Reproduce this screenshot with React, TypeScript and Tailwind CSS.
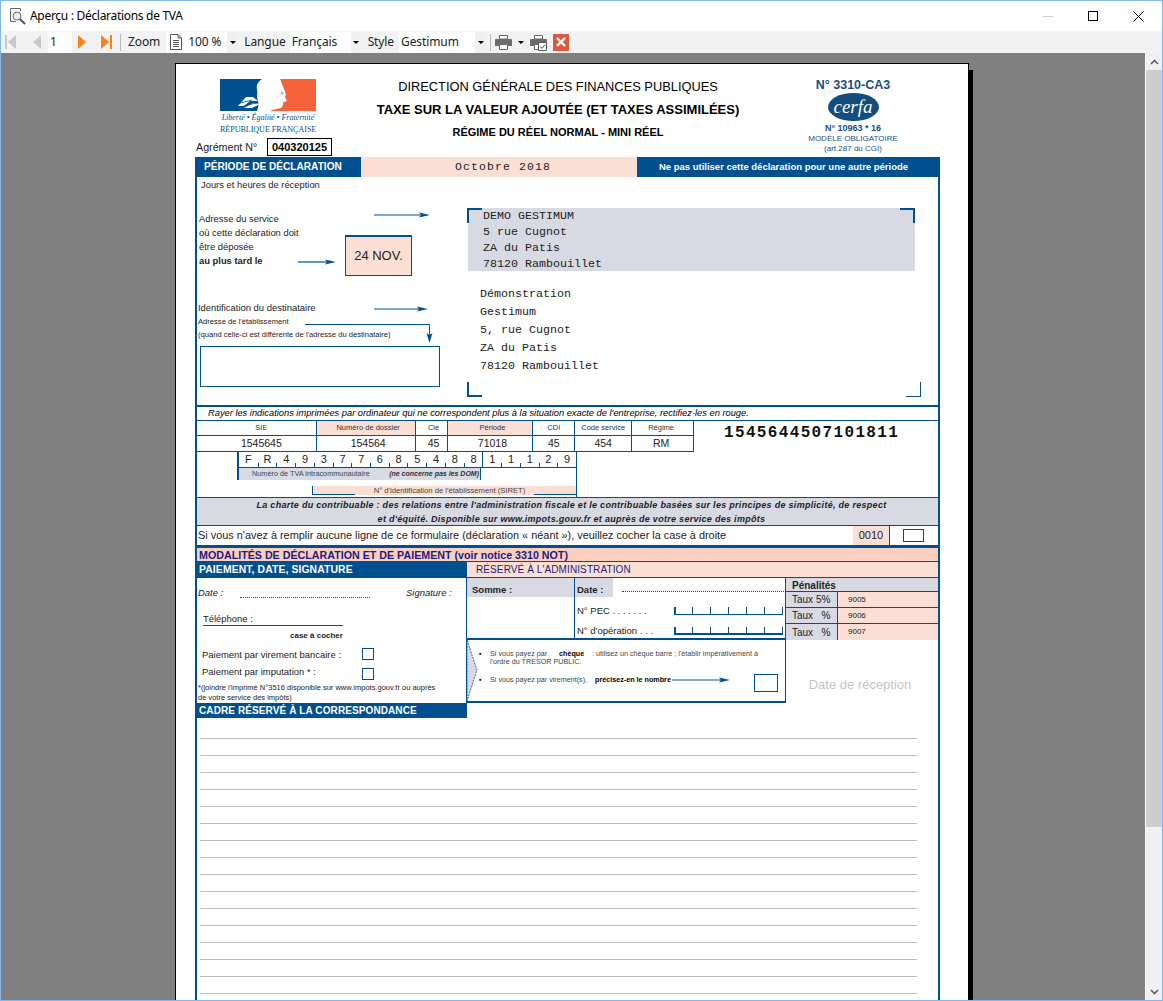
const blue = "#00508f";

function Arrow({ className, width }: { className: string; width: number }) {
  return (
    <svg className={`absolute ${className}`} width={width} height="8" viewBox={`0 0 ${width} 8`}>
      <line x1="0" y1="4" x2={width - 8} y2="4" stroke={blue} strokeWidth="1.2" />
      <path d={`M${width - 11} 1.5 L${width} 4 L${width - 11} 6.5 L${width - 9} 4 Z`} fill={blue} />
    </svg>
  );
}

function Corner({ className }: { className: string }) {
  return <div className={`absolute h-[15px] w-[15px] border-[#00508f] ${className}`} />;
}

function Marianne() {
  return (
    <svg width="96" height="32" viewBox="0 0 96 32">
      <path d="M0 0 H42 C38 3 36 6 37 10 C38 15 36 18 38 22 C39 26 38 29 37 32 H0 Z" fill="#00508f" />
      <path d="M60 0 H96 V32 H50 C54 30 60 30 62 28 C64 26 62 24 64 23 L67 22 L65 18 L66 15 C64 12 64 8 62 5 C61 3 61 2 60 0 Z" fill="#f5623a" />
      <path d="M18 27 L26 18 L33 18 L38 22 L30 22 L24 27 Z M24 29 L33 24 L40 25 L32 29 Z" fill="#fff" />
      <path d="M20 24 L32 21 M24 27 L36 24" stroke="#00508f" strokeWidth="0.8" />
      <circle cx="62" cy="14" r="1.5" fill="#9fb8d8" />
    </svg>
  );
}

function DocIcon() {
  return (
    <svg width="12" height="16" viewBox="0 0 12 16" fill="none" stroke="#555">
      <path d="M.5.5 H8 L11.5 4 V15.5 H.5 Z M8 .5 V4 H11.5" />
      <path d="M3 6.5 H9 M3 8.5 H9 M3 10.5 H9 M3 12.5 H9" />
    </svg>
  );
}

function PrinterIcon({ check }: { check?: boolean }) {
  return (
    <svg width="17" height="17" viewBox="0 0 17 17">
      <path d="M4.5 1.5 H12.5 V5 H4.5 Z" fill="#fff" stroke="#666" />
      <path d="M0 6 Q0 5 1 5 H16 Q17 5 17 6 V12 H13 V10 H4 V12 H0 Z" fill="#6b6b6b" />
      <path d="M4.5 10.5 H12.5 V15.5 H4.5 Z" fill="#fff" stroke="#666" />
      {check && <path d="M8.5 8.5 H16.5 V16.5 H8.5 Z" fill="#fff" stroke="#555" />}
      {check && <path d="M10.5 12.5 L12 14.5 L15 10.5" fill="none" stroke="#555" />}
    </svg>
  );
}

function TitleIcon() {
  return (
    <svg width="16" height="17" viewBox="0 0 16 17" fill="none" stroke="#666">
      <path d="M.5 13.5 V.5 H10.5 V3" />
      <path d="M.5 13.5 H6" />
      <circle cx="7" cy="8" r="4" fill="#eef2f6" />
      <path d="M10 11 L15 16" strokeWidth="2" stroke="#555" />
    </svg>
  );
}

function Combo({ text, width }: { text: string; width: number }) {
  return (
    <div className="flex h-[21px] items-center bg-white" style={{ width }}>
      <span className="flex-1 pl-[2px]">{text}</span>
      <div className="flex h-full w-[11px] items-center justify-center bg-[#f0f0f0]">
        <div className="h-0 w-0 border-x-[3px] border-t-[3px] border-x-transparent border-t-black" />
      </div>
    </div>
  );
}

function Toolbar() {
  return (
    <div className="flex h-[22px] items-center bg-[#f2f2f2] font-['Noto_Sans',sans-serif] text-[12px] tracking-[-0.1px] text-[#222]">
      <svg className="ml-[4px]" width="12" height="16" viewBox="0 0 12 16">
        <rect x="0" y="1" width="2" height="14" fill="#c8c8c8" />
        <path d="M11 1 V15 L3 8 Z" fill="#c8c8c8" />
      </svg>
      <svg className="ml-[14px]" width="11" height="16" viewBox="0 0 11 16">
        <path d="M10 1 V15 L2 8 Z" fill="#c8c8c8" />
      </svg>
      <div className="ml-[6px] flex h-[21px] w-[24px] items-center bg-white pl-[2px]">1</div>
      <svg className="ml-[5px]" width="10" height="16" viewBox="0 0 10 16">
        <path d="M1 1 V15 L9 8 Z" fill="#f5841f" />
      </svg>
      <svg className="ml-[14px]" width="12" height="16" viewBox="0 0 12 16">
        <path d="M0 1 V15 L8 8 Z" fill="#f5841f" />
        <rect x="9" y="1" width="2" height="14" fill="#f5841f" />
      </svg>
      <div className="ml-[7px] h-[17px] w-px bg-[#bbb]" />
      <span className="ml-[7px]">Zoom</span>
      <div className="ml-[6px] flex h-[21px] w-[72px] items-center bg-white pl-[4px]">
        <DocIcon />
        <span className="ml-[6px] flex-1">100 %</span>
        <div className="flex h-full w-[11px] items-center justify-center bg-[#f0f0f0]">
          <div className="h-0 w-0 border-x-[3px] border-t-[3px] border-x-transparent border-t-black" />
        </div>
      </div>
      <span className="ml-[6px]">Langue</span>
      <div className="ml-[4px]">
        <Combo text="Français" width={72} />
      </div>
      <span className="ml-[6px]">Style</span>
      <div className="ml-[5px]">
        <Combo text="Gestimum" width={87} />
      </div>
      <div className="ml-[4px] h-[17px] w-px bg-[#bbb]" />
      <div className="ml-[4px]">
        <PrinterIcon />
      </div>
      <div className="ml-[6px] h-0 w-0 border-x-[3px] border-t-[3px] border-x-transparent border-t-black" />
      <div className="ml-[6px]">
        <PrinterIcon check />
      </div>
      <div className="ml-[6px] flex h-[17px] w-[16px] items-center justify-center bg-[#dc5a3c]">
        <svg width="10" height="10" viewBox="0 0 10 10">
          <path d="M1 1 L9 9 M9 1 L1 9" stroke="#fff" strokeWidth="2.4" />
        </svg>
      </div>
    </div>
  );
}

function PageHeader() {
  return (
    <div className="flex h-[93px] font-['Liberation_Sans',sans-serif]">
      <div className="w-[160px]">
        <div className="ml-[25px] mt-[15px] h-[32px]">
          <Marianne />
        </div>
        <div className="ml-[25px] mt-[2px] h-[10px] w-[96px] whitespace-nowrap text-center font-['Liberation_Serif',serif] text-[8px] italic leading-[10px] text-[#00508f]">
          Liberté • Égalité • Fraternité
        </div>
        <div className="ml-[25px] mt-[2px] h-[10px] w-[96px] whitespace-nowrap text-center font-['Liberation_Serif',serif] text-[8px] leading-[10px] text-[#00508f]">
          RÉPUBLIQUE FRANÇAISE
        </div>
        <div className="mt-[3px] flex h-[18px] items-center">
          <span className="ml-[1px] w-[71px] text-[10.7px] text-[#222]">Agrément N°</span>
          <div className="flex h-[18px] w-[65px] items-center justify-center border border-black text-[11px] font-bold">
            040320125
          </div>
        </div>
      </div>
      <div className="w-[406px] text-center text-black">
        <div className="mt-[13px] h-[20px] text-[12.85px] leading-[20px]">DIRECTION GÉNÉRALE DES FINANCES PUBLIQUES</div>
        <div className="mt-[3px] h-[20px] text-[13px] font-bold leading-[20px]">
          TAXE SUR LA VALEUR AJOUTÉE (ET TAXES ASSIMILÉES)
        </div>
        <div className="mt-[2px] h-[20px] text-[11px] font-bold leading-[20px]">RÉGIME DU RÉEL NORMAL - MINI RÉEL</div>
      </div>
      <div className="flex w-[184px] flex-col items-center text-[#1b4f7b]">
        <div className="mt-[13px] h-[16px] text-[12.5px] font-bold leading-[16px]">N° 3310-CA3</div>
        <div className="flex h-[28px] w-[51px] items-center justify-center rounded-[50%] bg-[#124d7e] font-['Liberation_Serif',serif] text-[19px] italic leading-[28px] text-white">
          cerfa
        </div>
        <div className="mt-[2px] h-[10px] text-[9px] font-bold leading-[10px]">N° 10963 * 16</div>
        <div className="h-[11px] whitespace-nowrap text-[8px] leading-[11px]">MODÈLE OBLIGATOIRE</div>
        <div className="h-[9px] text-[8px] leading-[9px]">(art.287 du CGI)</div>
      </div>
    </div>
  );
}

function PeriodBar() {
  return (
    <div className="flex h-[20px] items-stretch">
      <div className="flex w-[164px] items-center whitespace-nowrap bg-[#00508f] pl-[7px] text-[10.1px] font-bold text-white">
        PÉRIODE DE DÉCLARATION
      </div>
      <div className="flex w-[276px] items-center justify-center bg-[#fbdfd5] pl-[8px] font-['Liberation_Mono',monospace] text-[11.5px] tracking-[1.1px] text-[#222]">
        Octobre 2018
      </div>
      <div className="flex flex-1 items-center justify-center whitespace-nowrap bg-[#00508f] pr-[8px] text-[9.5px] font-bold text-white">
        Ne pas utiliser cette déclaration pour une autre période
      </div>
    </div>
  );
}

function AddressSection() {
  return (
    <div className="relative flex h-[228px]">
      <div className="w-[270px] text-[#222]">
        <div className="h-[16px] whitespace-nowrap pl-[4px] text-[9.4px] leading-[16px]">Jours et heures de réception</div>
        <div className="mt-[19px] flex">
          <div className="w-[148px] pl-[2px] text-[9.4px] leading-[14px]">
            <div>Adresse du service</div>
            <div>où cette déclaration doit</div>
            <div>être déposée</div>
            <div className="font-bold">au plus tard le</div>
          </div>
          <div className="mt-[23px] flex h-[41px] w-[67px] items-center justify-center border-x border-b border-t-2 border-[#00508f] bg-[#fbdfd5] text-[13px]">
            24 NOV.
          </div>
        </div>
        <div className="mt-[25px] h-[14px] whitespace-nowrap pl-[1px] text-[9.45px] leading-[14px]">Identification du destinataire</div>
        <div className="h-[13px] whitespace-nowrap pl-[1px] text-[7.6px] leading-[13px]">Adresse de l'établissement</div>
        <div className="h-[13px] whitespace-nowrap pl-[1px] text-[7.6px] leading-[13px]">
          (quand celle-ci est différente de l'adresse du destinataire)
        </div>
        <div className="ml-[3px] mt-[5px] h-[41px] w-[240px] border border-[#00508f]" />
      </div>
      <div className="flex-1 font-['Liberation_Mono',monospace] text-[11.67px] text-[#222]">
        <div className="ml-[1px] mt-[31px] h-[63px] w-[447px] bg-[#d7dae3] pl-[15px] leading-[16px]">
          <div>DEMO GESTIMUM</div>
          <div>5 rue Cugnot</div>
          <div>ZA du Patis</div>
          <div>78120 Rambouillet</div>
        </div>
        <div className="mt-[14px] pl-[13px] leading-[18px]">
          <div>Démonstration</div>
          <div>Gestimum</div>
          <div>5, rue Cugnot</div>
          <div>ZA du Patis</div>
          <div>78120 Rambouillet</div>
        </div>
      </div>
      <Arrow className="left-[177px] top-[34px]" width={56} />
      <Arrow className="left-[101px] top-[81px]" width={38} />
      <Arrow className="left-[177px] top-[128px]" width={54} />
      <svg className="absolute left-[108px] top-[147px]" width="128" height="20" viewBox="0 0 128 20" fill="none">
        <path d="M0 .5 H124.5 V12" stroke={blue} strokeWidth="1" />
        <path d="M121.5 9 L124.5 19 L127.5 9 L124.5 11 Z" fill={blue} />
      </svg>
      <Corner className="left-[270px] top-[31px] border-l-2 border-t-2" />
      <Corner className="left-[703px] top-[31px] border-r-2 border-t-2" />
      <Corner className="left-[270px] top-[205px] border-b-2 border-l-2" />
      <Corner className="left-[709px] top-[205px] border-b border-r" />
    </div>
  );
}

const idCells = [
  { label: "SIE", value: "1545645", width: "w-[120px]", pad: "pl-[10px]", pink: false },
  { label: "Numéro de dossier", value: "154564", width: "w-[99px]", pad: "pl-[5px]", pink: true },
  { label: "Clé", value: "45", width: "w-[33px]", pad: "pl-[4px]", pink: false },
  { label: "Période", value: "71018", width: "w-[85px]", pad: "pl-[4px]", pink: true },
  { label: "CDI", value: "45", width: "w-[42px]", pad: "", pink: false },
  { label: "Code service", value: "454", width: "w-[57px]", pad: "", pink: false },
  { label: "Régime", value: "RM", width: "w-[61px]", pad: "pr-[3px]", pink: false },
];

const tvaChars = "FR493776854881 1129".replace(" ", "").split("");

function IdentSection() {
  return (
    <>
      <div className="flex h-[16px] items-center whitespace-nowrap border-b border-t-2 border-[#00508f] pl-[11px] text-[9.3px] italic text-black">
        Rayer les indications imprimées par ordinateur qui ne correspondent plus à la situation exacte de l'entreprise, rectifiez-les en rouge.
      </div>
      <div className="flex h-[31px]">
        <div className="flex w-[497px] border-b border-r border-[#00508f]">
          {idCells.map((cell) => (
            <div key={cell.label} className={`${cell.width} border-r border-[#00508f] last:border-r-0`}>
              <div
                className={`flex h-[15px] items-center justify-center whitespace-nowrap border-b border-[#00508f] text-[7.5px] text-[#333] ${cell.pad} ${
                  cell.pink ? "bg-[#fbdfd5]" : ""
                }`}
              >
                {cell.label}
              </div>
              <div className={`flex h-[15px] items-center justify-center text-[10.5px] text-[#222] ${cell.pad}`}>{cell.value}</div>
            </div>
          ))}
        </div>
        <div className="ml-[30px] font-['Liberation_Mono',monospace] text-[16px] font-bold leading-[24px] tracking-[1.35px] text-[#111]">
          1545644507101811
        </div>
      </div>
      <div className="ml-[40px] h-[45px] w-[340px] border-r border-[#00508f] text-[#222]">
        <div className="grid h-[16px] grid-cols-[repeat(18,1fr)] border-b border-l-2 border-[#00508f] text-[11px]">
          {tvaChars.map((c, i) => (
            <div key={i} className={`flex items-end ${i === 13 ? "border-l border-[#00508f]" : ""}`}>
              {i > 0 && i !== 13 && <div className="h-[4px] w-px bg-[#00508f]" />}
              <div className="flex-1 self-center text-center leading-[15px]">{c}</div>
            </div>
          ))}
        </div>
        <div className="flex h-[12px]">
          <div className="flex h-[12px] w-[244px] items-center justify-between whitespace-nowrap border-l-2 border-r border-[#00508f] bg-[#d7dae3] pl-[13px] pr-[1px] text-[7.3px] text-[#444]">
            <span>Numéro de TVA intracommunautaire</span>
            <span className="text-[7px] font-bold italic text-[#333]">(ne concerne pas les DOM)</span>
          </div>
        </div>
        <div className="ml-[75px] mt-[6px] flex h-[9px] border-l border-[#00508f] bg-[#fbdfd5] text-[7.65px] leading-[9px]">
          <div className="w-[42px] border-b border-[#00508f]" />
          <div className="flex-1 whitespace-nowrap pl-[10px] text-center text-[#444]">N° d'identification de l'établissement (SIRET)</div>
          <div className="w-[42px] border-b border-[#00508f]" />
        </div>
      </div>
      <div className="h-[28px] whitespace-nowrap border-t border-[#00508f] bg-[#d7dae3] pl-[8px] text-center text-[9px] font-bold italic leading-[14px] tracking-[0.29px] text-[#222]">
        <div>La charte du contribuable : des relations entre l'administration fiscale et le contribuable basées sur les principes de simplicité, de respect</div>
        <div>et d'équité. Disponible sur www.impots.gouv.fr et auprès de votre service des impôts</div>
      </div>
      <div className="flex h-[21px] border-y border-[#00508f] text-[10.9px] text-[#222]">
        <div className="w-[656px] pl-[1px] leading-[19px]">
          Si vous n'avez à remplir aucune ligne de ce formulaire (déclaration « néant »), veuillez cocher la case à droite
        </div>
        <div className="flex w-[37px] items-center justify-center border-r border-[#00508f] bg-[#fbdfd5] text-[11px]">0010</div>
        <div className="flex flex-1 items-center justify-center pr-[1px]">
          <div className="h-[13px] w-[21px] border border-[#00508f]" />
        </div>
      </div>
      <div className="h-[16px] whitespace-nowrap border-b border-t-2 border-[#00508f] bg-[#fbcfbf] pl-[2px] text-[10.7px] font-bold leading-[14px] text-[#1c1c80]">
        MODALITÉS DE DÉCLARATION ET DE PAIEMENT (voir notice 3310 NOT)
      </div>
    </>
  );
}

const penalties = [
  { label: "Taux 5%", code: "9005" },
  { label: "Taux   %", code: "9006" },
  { label: "Taux   %", code: "9007" },
];

function TickBox({ thick }: { thick?: boolean }) {
  return (
    <div className={`flex h-[8px] w-[109px] border-[#00508f] ${thick ? "border-b-2" : "border-b"}`}>
      {[0, 1, 2, 3, 4, 5].map((i) => (
        <div key={i} className={`w-[18px] border-l border-[#00508f] ${i === 0 ? "border-l-2" : ""}`} />
      ))}
      <div className="border-r border-[#00508f]" />
    </div>
  );
}

function PaymentSection() {
  return (
    <>
      <div className="flex h-[16px]">
        <div className="flex w-[270px] items-center whitespace-nowrap bg-[#00508f] pl-[2px] text-[10.4px] font-bold tracking-[0.1px] text-white">
          PAIEMENT, DATE, SIGNATURE
        </div>
        <div className="flex flex-1 items-center whitespace-nowrap border-b border-[#00508f] bg-[#fbdfd5] pl-[9px] text-[10px] tracking-[0.1px] text-[#1c1c80]">
          RÉSERVÉ À L'ADMINISTRATION
        </div>
      </div>
      <div className="flex h-[125px]">
        <div className="w-[270px] border-r border-[#00508f] text-[9.45px] text-[#222]">
          <div className="flex h-[30px] items-center pl-[1px] pt-[1px]">
            <span className="w-[42px] italic">Date :</span>
            <div className="mt-[8px] h-px w-[130px] border-b border-dotted border-[#444]" />
            <span className="ml-[36px] italic">Signature :</span>
          </div>
          <div className="ml-[6px] mt-[4px] h-[14px] w-[140px] border-b border-[#00508f] leading-[13px]">Téléphone :</div>
          <div className="ml-[93px] mt-[5px] h-[10px] text-[8px] font-bold leading-[10px]">case à cocher</div>
          <div className="ml-[5px] mt-[6px] flex h-[16px] items-start">
            <span className="w-[160px] leading-[16px]">Paiement par virement bancaire :</span>
            <div className="mt-[1px] h-[12px] w-[12px] border border-[#00508f]" />
          </div>
          <div className="ml-[5px] mt-[1px] flex h-[16px] items-start">
            <span className="w-[160px] leading-[16px]">Paiement par imputation * :</span>
            <div className="mt-[4px] h-[12px] w-[12px] border border-[#00508f]" />
          </div>
          <div className="mt-[3px] whitespace-nowrap pl-[1px] text-[7.5px] leading-[10px]">
            *(joindre l'imprimé N°3516 disponible sur www.impots.gouv.fr ou auprès
            <br />
            de votre service des impôts)
          </div>
        </div>
        <div className="flex-1 text-[#222]">
          <div className="flex h-[62px] border-b-2 border-[#00508f]">
            <div className="w-[108px] border-r border-[#00508f]">
              <div className="flex h-[19px] items-center bg-[#d7dae3] pl-[5px] pt-[6px] text-[9.5px] font-bold">Somme :</div>
            </div>
            <div className="w-[211px] border-r border-[#00508f] text-[9.5px]">
              <div className="flex h-[19px] items-center">
                <div className="flex h-full w-[38px] items-center bg-[#d7dae3] pl-[2px] pt-[6px] font-bold">Date :</div>
                <div className="ml-[9px] mt-[8px] w-[162px] border-b border-dotted border-[#00508f]" />
              </div>
              <div className="mt-[4px] flex h-[20px] items-center justify-between whitespace-nowrap px-[2px]">
                <span>N° PEC . . . . . . .</span>
                <TickBox />
              </div>
              <div className="flex h-[20px] items-center justify-between whitespace-nowrap px-[2px]">
                <span>N° d'opération . . .</span>
                <TickBox thick />
              </div>
            </div>
            <div className="flex-1 text-[10px]">
              <div className="flex h-[14px] items-center border-b border-[#00508f] bg-[#d7dae3] pl-[6px] pt-px font-bold">Pénalités</div>
              {penalties.map((p) => (
                <div key={p.code} className="flex h-[16px] border-b border-[#00508f] last:border-b-0">
                  <div className="flex w-[52px] items-center whitespace-pre border-r border-[#00508f] bg-[#d7dae3] pl-[6px] text-[10px]">
                    {p.label}
                  </div>
                  <div className="flex flex-1 items-center bg-[#fbdfd5] pl-[10px] text-[8px]">{p.code}</div>
                </div>
              ))}
            </div>
          </div>
          <div className="flex h-[63px]">
            <div className="flex w-[319px] border-b-2 border-r border-[#00508f]">
              <svg className="shrink-0" width="11" height="61" viewBox="0 0 11 61">
                <path d="M0 0 L10 30 L0 61 Z" fill="#d7dae3" stroke={blue} strokeWidth="0.8" strokeDasharray="2 1" />
              </svg>
              <div className="flex-1 pl-[1px] text-[7.2px] leading-[8px] text-[#444]">
                <div className="mt-[10px] flex">
                  <span className="w-[11px] text-black">▪</span>
                  <div>
                    <div className="flex whitespace-nowrap">
                      <span className="w-[69px]">Si vous payez par</span>
                      <span className="w-[33px] font-bold text-black">chèque</span>
                      <span>: utilisez un chèque barré ; l'établir impérativement à</span>
                    </div>
                    <div>l'ordre du TRESOR PUBLIC.</div>
                  </div>
                </div>
                <div className="mt-[8px] flex items-center">
                  <div className="mb-[6px] flex h-[8px] items-center">
                    <span className="w-[11px] text-black">▪</span>
                    <span className="w-[105px] whitespace-nowrap">Si vous payez par virement(s),</span>
                    <span className="whitespace-nowrap font-bold text-black">précisez-en le nombre</span>
                    <svg className="ml-[1px]" width="59" height="8" viewBox="0 0 59 8">
                      <line x1="0" y1="4" x2="51" y2="4" stroke={blue} strokeWidth="1" />
                      <path d="M47 1.5 L58 4 L47 6.5 L49 4 Z" fill={blue} />
                    </svg>
                  </div>
                  <div className="ml-[23px] h-[18px] w-[24px] shrink-0 border border-[#00508f]" />
                </div>
              </div>
            </div>
            <div className="flex flex-1 items-center justify-center whitespace-nowrap pr-[4px] pt-[27px] text-[13px] text-[#c4c4c4]">
              Date de réception
            </div>
          </div>
        </div>
      </div>
      <div className="flex h-[15px] w-[270px] items-center whitespace-nowrap bg-[#00508f] pl-[2px] text-[10px] font-bold tracking-[0.1px] text-white">
        CADRE RÉSERVÉ À LA CORRESPONDANCE
      </div>
    </>
  );
}

function Lines() {
  return (
    <div className="ml-[3px] flex w-[717px] flex-col gap-[16px] pt-[20px]">
      {Array.from({ length: 16 }).map((_, i) => (
        <div key={i} className="h-px bg-[#bbbbbb]" />
      ))}
    </div>
  );
}

function Scrollbar() {
  return (
    <div className="flex w-[17px] flex-col border-l border-white bg-[#f0f0f0]">
      <div className="flex h-[17px] items-center justify-center">
        <svg width="9" height="6" viewBox="0 0 9 6">
          <path d="M1 5 L4.5 1.5 L8 5" fill="none" stroke="#606060" strokeWidth="1.6" />
        </svg>
      </div>
      <div className="h-[757px] bg-[#cdcdcd]" />
      <div className="flex flex-1 items-end justify-center pb-[5px]">
        <svg width="9" height="6" viewBox="0 0 9 6">
          <path d="M1 1 L4.5 4.5 L8 1" fill="none" stroke="#606060" strokeWidth="1.6" />
        </svg>
      </div>
    </div>
  );
}

export default function App() {
  return (
    <div className="flex h-[1001px] w-[1163px] flex-col overflow-hidden border border-[#7fb9f2] bg-white">
      <div className="flex h-[30px] items-center font-['Noto_Sans',sans-serif] text-[12px] text-black">
        <div className="ml-[9px]">
          <TitleIcon />
        </div>
        <span className="ml-[4px] tracking-[-0.3px]">Aperçu : Déclarations de TVA</span>
        <div className="ml-auto flex items-center">
          <div className="mr-[35px] h-px w-[10px] bg-[#ccc]" />
          <div className="mr-[35px] h-[10px] w-[10px] border border-black" />
          <svg className="mr-[18px]" width="11" height="11" viewBox="0 0 11 11">
            <path d="M.5 .5 L10.5 10.5 M10.5 .5 L.5 10.5" stroke="#000" />
          </svg>
        </div>
      </div>
      <Toolbar />
      <div className="flex min-h-0 flex-1">
        <div className="min-w-0 flex-1 overflow-hidden bg-[#808080] pl-[174px] pt-[10px]">
          <div className="h-[1100px] w-[794px] border-x border-t border-black bg-white pl-[19px] shadow-[4px_7px_0_#000] font-['Liberation_Sans',sans-serif]">
            <PageHeader />
            <div className="w-[745px] border-x-2 border-[#00508f] pb-[100px]">
              <PeriodBar />
              <AddressSection />
              <IdentSection />
              <PaymentSection />
              <Lines />
            </div>
          </div>
        </div>
        <Scrollbar />
      </div>
    </div>
  );
}
